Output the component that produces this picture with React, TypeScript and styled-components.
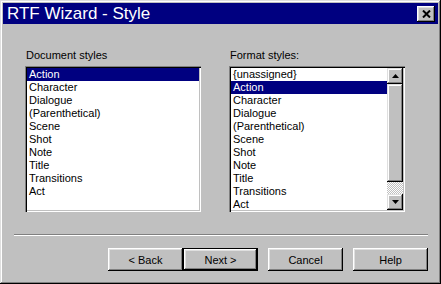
import * as React from 'react'
import styled, { createGlobalStyle } from 'styled-components'

const GlobalStyle = createGlobalStyle`
  html, body {
    margin: 0;
    padding: 0;
    background: #c0c0c0;
  }
  * {
    box-sizing: border-box;
  }
`

const FACE = '#c0c0c0'
const SHADOW = '#808080'
const LIGHT = '#dfdfdf'
const NAVY = '#000080'

const Window = styled.div`
  width: 441px;
  height: 284px;
  padding: 3px;
  display: flex;
  flex-direction: column;
  background: ${FACE};
  box-shadow: inset -1px -1px #000, inset 1px 1px ${LIGHT}, inset -2px -2px ${SHADOW}, inset 2px 2px #fff;
  font-family: 'Liberation Sans', Arial, sans-serif;
  font-size: 11px;
  color: #000;
`

const TitleBar = styled.div`
  height: 21px;
  background: ${NAVY};
  display: flex;
  align-items: center;
  justify-content: space-between;
  padding: 0 3px 0 4px;
`

const Title = styled.span`
  color: #fff;
  font-size: 17px;
  line-height: 21px;
`

const CloseButton = styled.div`
  width: 18px;
  height: 16px;
  display: flex;
  align-items: center;
  justify-content: center;
  background: ${FACE};
  box-shadow: inset -1px -1px #000, inset 1px 1px #fff, inset -2px -2px ${SHADOW}, inset 2px 2px ${LIGHT};
`

const Body = styled.div`
  flex: 1;
  display: flex;
  flex-direction: column;
  padding: 25px 0 10px 0;
`

const Columns = styled.div`
  display: flex;
  gap: 28px;
  padding-left: 22px;
`

const Group = styled.div`
  width: 176px;
  display: flex;
  flex-direction: column;
`

const Label = styled.div`
  line-height: 13px;
  height: 13px;
  margin-bottom: 4px;
  padding-left: 1px;
`

const ListBox = styled.div`
  height: 146px;
  padding: 2px;
  background: #fff;
  display: flex;
  box-shadow: inset 1px 1px ${SHADOW}, inset 2px 2px #000, inset -1px -1px #fff, inset -2px -2px ${FACE};
`

const Items = styled.div`
  flex: 1;
  overflow: hidden;
`

const Item = styled.div<{ $selected?: boolean }>`
  height: 13px;
  line-height: 13px;
  padding-left: 2px;
  white-space: nowrap;
  background: ${p => (p.$selected ? NAVY : 'transparent')};
  color: ${p => (p.$selected ? '#fff' : '#000')};
`

const ScrollBar = styled.div`
  width: 16px;
  display: flex;
  flex-direction: column;
`

const ScrollButton = styled.div`
  width: 16px;
  height: 16px;
  flex: none;
  display: flex;
  align-items: center;
  justify-content: center;
  background: ${FACE};
  box-shadow: inset -1px -1px #000, inset 1px 1px ${LIGHT}, inset -2px -2px ${SHADOW}, inset 2px 2px #fff;
`

const Thumb = styled(ScrollButton)`
  height: 98px;
`

const Track = styled.div`
  flex: 1;
  background-image: conic-gradient(#fff 25%, ${FACE} 0 50%, #fff 0 75%, ${FACE} 0);
  background-size: 2px 2px;
`

const Separator = styled.div`
  height: 2px;
  margin: 22px 10px 0 11px;
  border-top: 1px solid ${SHADOW};
  border-bottom: 1px solid #fff;
`

const ButtonRow = styled.div`
  display: flex;
  justify-content: flex-end;
  margin-top: 12px;
  padding-right: 10px;
`

const ButtonPair = styled.div`
  display: flex;
  margin-right: 10px;
`

const Button = styled.div<{ $default?: boolean; $gap?: boolean }>`
  width: 75px;
  height: 23px;
  display: flex;
  align-items: center;
  justify-content: center;
  margin-left: ${p => (p.$gap ? 10 : 0)}px;
  background: ${FACE};
  box-shadow: ${p =>
    p.$default
      ? `inset 0 0 0 1px #000, inset -2px -2px #000, inset 2px 2px #fff, inset -3px -3px ${SHADOW}, inset 3px 3px ${LIGHT}`
      : `inset -1px -1px #000, inset 1px 1px #fff, inset -2px -2px ${SHADOW}, inset 2px 2px ${LIGHT}`};
`

const Arrow = ({ up }: { up?: boolean }) => (
  <svg width="7" height="4" viewBox="0 0 7 4">
    <path d={up ? 'M3.5 0 L7 4 L0 4 Z' : 'M0 0 L7 0 L3.5 4 Z'} fill="#000" />
  </svg>
)

const CloseIcon = () => (
  <svg width="9" height="8" viewBox="0 0 9 8">
    <path d="M1 0.5 L8 7.5 M8 0.5 L1 7.5" stroke="#000" strokeWidth="2" />
  </svg>
)

const docStyles = ['Action', 'Character', 'Dialogue', '(Parenthetical)', 'Scene', 'Shot', 'Note', 'Title', 'Transitions', 'Act']
const formatStyles = ['{unassigned}', ...docStyles]

const App: React.FC = () => (
  <>
    <GlobalStyle />
    <Window>
      <TitleBar>
        <Title>RTF Wizard - Style</Title>
        <CloseButton>
          <CloseIcon />
        </CloseButton>
      </TitleBar>
      <Body>
        <Columns>
          <Group>
            <Label>Document styles</Label>
            <ListBox>
              <Items>
                {docStyles.map(s => (
                  <Item key={s} $selected={s === 'Action'}>{s}</Item>
                ))}
              </Items>
            </ListBox>
          </Group>
          <Group>
            <Label>Format styles:</Label>
            <ListBox>
              <Items>
                {formatStyles.map(s => (
                  <Item key={s} $selected={s === 'Action'}>{s}</Item>
                ))}
              </Items>
              <ScrollBar>
                <ScrollButton>
                  <Arrow up />
                </ScrollButton>
                <Thumb />
                <Track />
                <ScrollButton>
                  <Arrow />
                </ScrollButton>
              </ScrollBar>
            </ListBox>
          </Group>
        </Columns>
        <Separator />
        <ButtonRow>
          <ButtonPair>
            <Button>&lt; Back</Button>
            <Button $default>Next &gt;</Button>
          </ButtonPair>
          <Button>Cancel</Button>
          <Button $gap>Help</Button>
        </ButtonRow>
      </Body>
    </Window>
  </>
)

export default App
